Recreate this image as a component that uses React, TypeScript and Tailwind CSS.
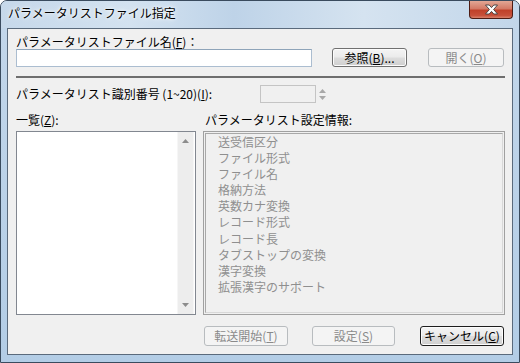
import React from "react";

const U = ({ c }: { c: string }) => <span className="underline underline-offset-[1px]">{c}</span>;

function Btn({
  children,
  disabled,
  def,
  w,
  h,
}: {
  children: React.ReactNode;
  disabled?: boolean;
  def?: boolean;
  w: string;
  h: string;
}) {
  const base = "flex items-center justify-center rounded-[3px] text-[12px] leading-none shrink-0";
  if (disabled)
    return (
      <div className={`${base} ${w} ${h} border border-[#b8bcbf] bg-[#f4f4f4] text-[#8a8a8a]`}>{children}</div>
    );
  return (
    <div
      className={`${base} ${w} ${h} border ${def ? "border-[#1e1e1e]" : "border-[#707070]"} bg-[linear-gradient(#f4f4f4_0%,#ebebeb_48%,#dddddd_52%,#cfcfcf_100%)] text-black shadow-[inset_0_0_0_1px_#fcfcfc]`}
    >
      {children}
    </div>
  );
}

const items = [
  "送受信区分",
  "ファイル形式",
  "ファイル名",
  "格納方法",
  "英数カナ変換",
  "レコード形式",
  "レコード長",
  "タブストップの変換",
  "漢字変換",
  "拡張漢字のサポート",
];

export default function App() {
  return (
    <div
      className="w-[520px] h-[363px] flex flex-col overflow-hidden rounded-t-[7px] border border-[#3a4b5e] bg-[linear-gradient(180deg,#cfdeed_0%,#c2d6ea_8%,#b3cde6_100%)] text-black"
      style={{ fontFamily: '"Noto Sans CJK JP", "Noto Sans", sans-serif' }}
    >
      {/* title bar */}
      <div className="relative h-[27px] shrink-0 bg-[linear-gradient(90deg,#c6d8ea_0%,#d3e2f0_25%,#bed3e8_45%,#d5e3f0_70%,#c2d6ea_100%)]">
        <div className="pl-[7px] pt-[5px] text-[12px] leading-[14px] text-black [text-shadow:0_0_6px_#ffffff,0_0_3px_#ffffff]">
          パラメータリストファイル指定
        </div>
        <div className="absolute right-[6px] top-0 w-[44px] h-[18px] rounded-b-[4px] border border-t-0 border-[#4e1c14] bg-[linear-gradient(180deg,#e3a795_0%,#d47a66_45%,#c0412a_55%,#c7503a_85%,#d9826c_100%)] flex items-center justify-center">
          <svg width="15" height="11" viewBox="0 0 15 11">
            <path
              d="M1.5 1 L5.2 1 L7.5 3.6 L9.8 1 L13.5 1 L9.6 5.5 L13.5 10 L9.8 10 L7.5 7.4 L5.2 10 L1.5 10 L5.4 5.5 Z"
              fill="#ffffff"
              stroke="#3c3c3c"
              strokeWidth="0.9"
              strokeLinejoin="round"
            />
          </svg>
        </div>
      </div>

      {/* client area */}
      <div className="mx-[6px] mb-[7px] flex-1 border border-[#5a6a7c] bg-[#f0f0f0] flex flex-col pl-[8px] pr-[7px] pt-[6px] text-[12px]">
        <div className="h-[13px] leading-[13px]">
          パラメータリストファイル名(<U c="F" />)：
        </div>
        <div className="flex items-start">
          <div className="mt-px w-[296px] h-[18px] border border-[#abbdd0] border-t-[#8ea4b9] bg-white" />
          <div className="ml-[20px]">
            <Btn w="w-[75px]" h="h-[19px]">
              参照(<U c="B" />)...
            </Btn>
          </div>
          <div className="ml-[21px]">
            <Btn w="w-[76px]" h="h-[19px]" disabled>
              開く(<U c="O" />)
            </Btn>
          </div>
        </div>

        <div className="mt-[9px] h-[2px] bg-[#6e6e6e]" />

        <div className="mt-[7px] flex items-center h-[18px]">
          <div className="w-[244px] leading-[14px]">
            パラメータリスト識別番号 (1~20)(<U c="I" />):
          </div>
          <div className="w-[56px] h-[18px] border border-[#c4c4c4] bg-[#f0f0f0]" />
          <div className="w-[11px] h-[18px] flex flex-col items-center justify-center gap-[3px] ml-px">
            <svg width="7" height="4" viewBox="0 0 7 4">
              <path d="M0 4 L3.5 0 L7 4 Z" fill="#a8a8a8" />
            </svg>
            <svg width="7" height="4" viewBox="0 0 7 4">
              <path d="M0 0 L7 0 L3.5 4 Z" fill="#a8a8a8" />
            </svg>
          </div>
        </div>

        <div className="mt-[10px] flex h-[14px] leading-[14px]">
          <div className="w-[189px]">
            一覧(<U c="Z" />):
          </div>
          <div>パラメータリスト設定情報:</div>
        </div>

        <div className="mt-[4px] flex h-[184px]">
          <div className="w-[180px] border border-[#828790] bg-white flex justify-end">
            <div className="w-[17px] mr-px h-full bg-[#ededed] border-x border-[#f6f6f6] flex flex-col items-center justify-between py-[7px]">
              <svg width="7" height="4" viewBox="0 0 7 4">
                <path d="M0 4 L3.5 0 L7 4 Z" fill="#8c8c8c" />
              </svg>
              <svg width="7" height="4" viewBox="0 0 7 4">
                <path d="M0 0 L7 0 L3.5 4 Z" fill="#8c8c8c" />
              </svg>
            </div>
          </div>
          <div className="ml-[7px] w-[302px] border border-[#a0a0a0] p-px">
            <div className="h-full border border-[#a8a8a8] border-r-[#d8d8d8] border-b-[#d8d8d8] bg-[#f0f0f0] pl-[12px] text-[#8f8f8f] leading-[16.1px]">
              {items.map((t) => (
                <div key={t}>{t}</div>
              ))}
            </div>
          </div>
        </div>

        <div className="mt-[11px] flex">
          <div className="ml-[188px]">
            <Btn w="w-[84px]" h="h-[20px]" disabled>
              転送開始(<U c="T" />)
            </Btn>
          </div>
          <div className="ml-[24px]">
            <Btn w="w-[83px]" h="h-[20px]" disabled>
              設定(<U c="S" />)
            </Btn>
          </div>
          <div className="ml-[25px]">
            <Btn w="w-[84px]" h="h-[20px]" def>
              キャンセル(<U c="C" />)
            </Btn>
          </div>
        </div>
      </div>
    </div>
  );
}
